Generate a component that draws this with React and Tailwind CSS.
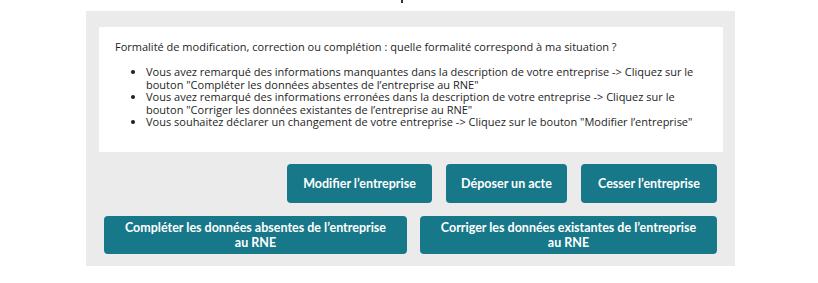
const bullets = [
  'Vous avez remarqué des informations manquantes dans la description de votre entreprise -> Cliquez sur le bouton "Compléter les données absentes de l’entreprise au RNE"',
  'Vous avez remarqué des informations erronées dans la description de votre entreprise -> Cliquez sur le bouton "Corriger les données existantes de l’entreprise au RNE"',
  'Vous souhaitez déclarer un changement de votre entreprise -> Cliquez sur le bouton "Modifier l’entreprise"',
]

function ActionButton({ className = "", children }) {
  return (
    <button
      className={
        "rounded-[4px] bg-[#177889] text-white text-[12.5px] font-bold leading-[15px] text-center font-['Lato',sans-serif] " +
        className
      }
    >
      {children}
    </button>
  )
}

export default function App() {
  return (
    <div className="w-[818px] h-[283px] bg-white font-['Open_Sans',sans-serif]">
      {/* bit of the title above, cut off */}
      <div className="h-[11px] pl-[401px]">
        <div className="w-[2px] h-[3px] bg-[#333]" />
      </div>

      <div className="ml-[86px] w-[649px] bg-[#ebebeb] pt-[16px] pb-[12px]">
        <div className="ml-[13px] mr-[12px] bg-white pl-[16px] pr-[20px] pt-[14px] h-[125px] text-[11px] leading-[12.4px] text-[#1e1e1e]">
          <p>Formalité de modification, correction ou complétion : quelle formalité correspond à ma situation ?</p>
          <ul className="mt-[13px] pl-[31px] list-disc">
            {bullets.map((b, i) => (
              <li key={i}>{b}</li>
            ))}
          </ul>
        </div>

        <div className="px-[18px]">
          <div className="mt-[12px] flex justify-end gap-[14px]">
            <ActionButton className="w-[145px] h-[39px]">Modifier l’entreprise</ActionButton>
            <ActionButton className="w-[121px] h-[39px]">Déposer un acte</ActionButton>
            <ActionButton className="w-[136px] h-[39px]">Cesser l’entreprise</ActionButton>
          </div>
          <div className="mt-[13px] flex justify-between">
            <ActionButton className="w-[303px] h-[38px]">
              Compléter les données absentes de l’entreprise
              <br />
              au RNE
            </ActionButton>
            <ActionButton className="w-[297px] h-[38px]">
              Corriger les données existantes de l’entreprise
              <br />
              au RNE
            </ActionButton>
          </div>
        </div>
      </div>
    </div>
  )
}
